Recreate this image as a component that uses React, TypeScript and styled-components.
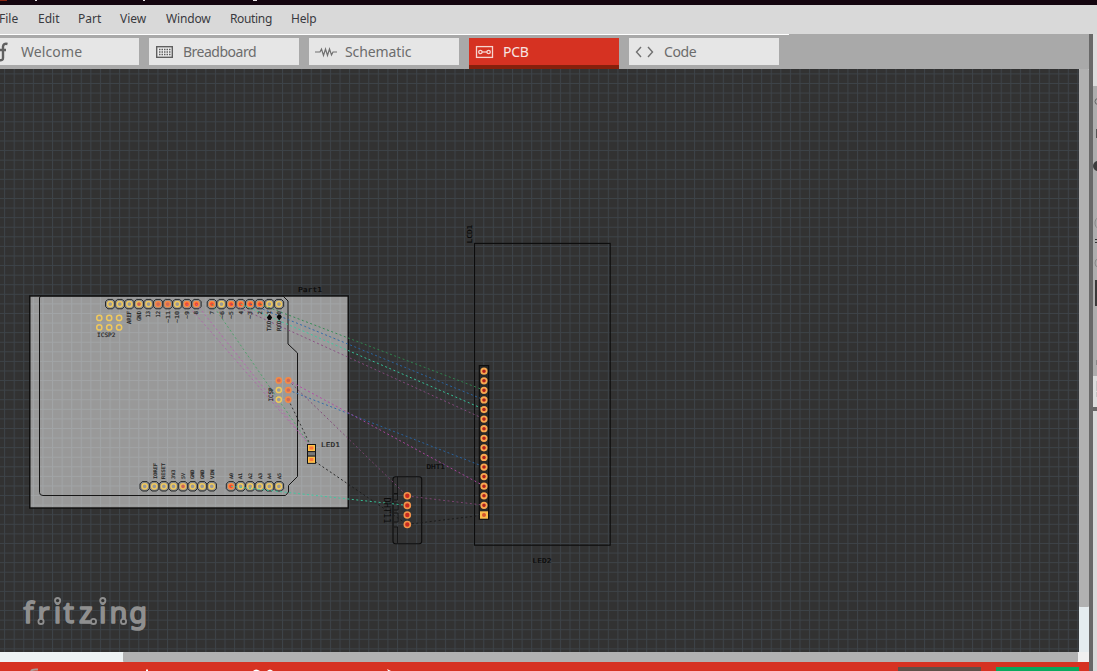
import React from "react";
import styled, { createGlobalStyle } from "styled-components";

const GlobalStyle = createGlobalStyle`
  html, body { margin: 0; padding: 0; overflow: hidden; }
  body { font-family: "Noto Sans", sans-serif; background: #a9a9a9; }
  * { box-sizing: border-box; }
`;

const Window = styled.div`
  width: 1097px;
  height: 671px;
  display: flex;
  flex-direction: column;
  overflow: hidden;
`;

const TitleBar = styled.div`
  height: 5px;
  background: #14050f;
  svg { display: block; }
`;

const MenuBar = styled.nav`
  height: 29px;
  display: flex;
  align-items: center;
  padding-bottom: 2px;
  margin-left: -1px;
  background: #d9d9d9;
  color: #3a3a40;
  font-size: 12px;
  line-height: 16px;
`;

const MenuItem = styled.span<{ $w: number; $ls: number }>`
  flex: 0 0 ${(p) => p.$w}px;
  letter-spacing: ${(p) => p.$ls}px;
  white-space: nowrap;
`;

const Workspace = styled.div`
  display: flex;
  height: 637px;
`;

const Main = styled.main`
  width: 1089px;
  display: flex;
  flex-direction: column;
`;

const TabStrip = styled.div`
  height: 35px;
  background: #a9a9a9;
`;

const TabHighlight = styled.div`
  width: 789px;
  height: 1px;
  background: #fff;
`;

const Tabs = styled.div`
  display: flex;
  gap: 10px;
  padding-top: 3px;
  margin-left: -11px;
`;

const Tab = styled.div<{ $active?: boolean; $icon?: number; $ls?: number }>`
  width: 150px;
  height: ${(p) => (p.$active ? 31 : 27)}px;
  padding: 0 0 0 6px;
  display: flex;
  align-items: center;
  background: ${(p) => (p.$active ? "#d63222" : "#e6e6e6")};
  border-bottom: ${(p) => (p.$active ? "4px solid #86200c" : "none")};
  color: ${(p) => (p.$active ? "#f6e4e1" : "#6c6c6c")};
  font-size: 14px;
  line-height: 20px;
  letter-spacing: ${(p) => p.$ls ?? 0}px;
  svg { flex: 0 0 ${(p) => p.$icon ?? 28}px; }
`;

const CanvasRow = styled.div`
  display: flex;
  height: 583px;
`;

const Board = styled.svg`
  display: block;
  width: 1079px;
  height: 583px;
  background: #323232;
`;

const VScroll = styled.div`
  width: 10px;
  background: #e5ecef;
`;

const VThumb = styled.div`
  height: 538px;
  background: #b1b1b1;
  border-radius: 1px;
`;

const HScroll = styled.div`
  height: 10px;
  display: flex;
  background: #eef3f4;
`;

const HThumb = styled.div`
  margin-left: 123px;
  width: 955px;
  background: #b1b1b1;
  border-radius: 1px;
`;

const ScrollCorner = styled.div`
  flex: 1;
  background: #f0f0f0;
`;

const Footer = styled.footer`
  height: 9px;
  display: flex;
  background: #d63222;
`;

const FooterMarks = styled.svg`
  flex: 0 0 898px;
  height: 9px;
`;

const FooterButton = styled.div<{ $color: string }>`
  flex: 0 0 83px;
  height: 4px;
  margin: 5px 15px 0 0;
  background: ${(p) => p.$color};
`;

const Splitter = styled.div`
  width: 4px;
  background: #686868;
`;

const Side = styled.aside`
  width: 4px;
  display: flex;
  flex-direction: column;
`;

const SidePart = styled.div<{ $h: number; $c: string }>`
  height: ${(p) => p.$h}px;
  background: ${(p) => p.$c};
  svg { display: block; }
`;

const P = 9.583;
const run = (start: number, n: number) => Array.from({ length: n }, (_, i) => start + i * P);

type PinKind = "open" | "warm" | "muted" | "hot";
const ringColor: Record<PinKind, string> = { open: "#f0c95c", warm: "#efbc58", muted: "#f58a45", hot: "#fb8a42" };
const coreColor: Record<PinKind, string> = { open: "#999", warm: "#c9665a", muted: "#cf6a58", hot: "#ee4a34" };

const Pin = ({ x, y, kind, frame }: { x: number; y: number; kind: PinKind; frame?: boolean }) => (
  <g>
    {frame && (
      <path
        d={`M${x - 2.4} ${y - 4.7}h4.8l2.3 2.3v4.8l-2.3 2.3h-4.8l-2.3-2.3v-4.8z`}
        fill="#8d8d8d"
        stroke="#26292b"
        strokeWidth="1"
      />
    )}
    <circle cx={x} cy={y} r="2.6" fill={coreColor[kind]} stroke={ringColor[kind]} strokeWidth="1.5" />
  </g>
);

const Silk = ({ x, y, w, children, size = 6, rot = 0, end, color = "#1f1f1f" }: {
  x: number; y: number; w: number; children: string; size?: number; rot?: number; end?: boolean; color?: string;
}) => (
  <text
    transform={`translate(${x} ${y}) rotate(${rot})`}
    fontFamily='"DejaVu Sans Mono", monospace'
    fontSize={size}
    fill={color}
    stroke={color}
    strokeWidth=".15"
    textLength={w}
    lengthAdjust="spacingAndGlyphs"
    textAnchor={end ? "end" : "start"}
  >
    {children}
  </text>
);

const topKinds: PinKind[] = ["open", "open", "open", "warm", "open", "muted", "muted", "open", "hot", "hot"];
const topKinds2: PinKind[] = ["hot", "open", "hot", "hot", "hot", "hot", "open", "open"];
const lowKinds: PinKind[] = ["open", "open", "open", "open", "warm", "open", "open", "open"];
const lowKinds2: PinKind[] = ["hot", "open", "open", "open", "open", "open"];

const topLabels: [string, number, number][] = [
  ["AREF", 129.2, 13], ["GND", 138.8, 10], ["13", 148.3, 6.5], ["12", 157.9, 6.5],
  ["~11", 167.5, 12], ["~10", 177.1, 12], ["~9", 186.7, 8], ["8", 196.3, 3.5],
  ["7", 212, 3.5], ["~6", 221.5, 8], ["~5", 231, 8], ["4", 240.6, 3.5], ["~3", 250.2, 8], ["2", 259.8, 3.5],
];
const lowLabels: [string, number, number][] = [
  ["IOREF", 154.7, 16], ["RESET", 163.2, 16], ["3V3", 173.5, 9.5], ["5V", 183, 6], ["GND", 192.6, 9.5],
  ["GND", 202.2, 9.5], ["VIN", 211.8, 9.5], ["A0", 231, 6], ["A1", 240.6, 6], ["A2", 250.2, 6],
  ["A3", 259.8, 6], ["A4", 269.3, 6], ["A5", 278.9, 6],
];

const wires: [number, number, number, number, string][] = [
  [259.8, 304, 484, 390.2, "#2e8b50"],
  [250.2, 304, 484, 399.8, "#2869ad"],
  [240.6, 304, 484, 409.3, "#36cfa2"],
  [231, 304, 484, 418.9, "#8a4b83"],
  [288.3, 390, 484, 466.8, "#2869ad"],
  [288.3, 380.4, 484, 486, "#b546a8"],
  [288.3, 380.4, 407.3, 496, "#814577"],
  [196.3, 304, 311.3, 447, "#ba62b3"],
  [186.7, 304, 311.3, 447, "#b066ac"],
  [212, 304, 311.3, 447, "#4ba46a"],
  [288.3, 399.5, 311.3, 447, "#292929"],
  [311.3, 459, 407.3, 524.4, "#1b1b1b"],
  [407.3, 524.4, 484, 515, "#181818"],
  [407.3, 496, 484, 505.2, "#814577"],
  [231, 486.3, 407.3, 505.4, "#36cfa2"],
];

const PcbBoard = () => (
  <Board viewBox="0 69 1079 583">
    <defs>
      <pattern id="grid" x="4.1" y="83" width={P} height={P} patternUnits="userSpaceOnUse">
        <path d={`M.5 0V${P}M0 .5H${P}`} stroke="#3d4348" strokeWidth="1" fill="none" />
      </pattern>
      <pattern id="gridLight" x="4.1" y="83" width={P} height={P} patternUnits="userSpaceOnUse">
        <path d={`M.5 0V${P}M0 .5H${P}`} stroke="#a1a4a6" strokeWidth="1" fill="none" />
      </pattern>
    </defs>
    <rect y="69" width="1079" height="583" fill="url(#grid)" />
    <rect x="29.8" y="296" width="318.4" height="212" fill="#999" />
    <rect x="29.8" y="296" width="318.4" height="212" fill="url(#gridLight)" stroke="#0c0c0c" strokeWidth="1.4" />
    <path
      d="M39.5 298q0-2 2-2H283l5 5V344l9.5 9V476.5l-9 9V492l-3 3.5H43q-3.5 0-3.5-3z"
      fill="none" stroke="#161616" strokeWidth="1"
    />
    <g fill="none" stroke="#0c0c0c" strokeWidth="1.1">
      <rect x="474.5" y="243.4" width="135.7" height="301.8" />
      <rect x="479.3" y="365.6" width="9.4" height="153.6" fill="#282828" />
      <rect x="393" y="476.7" width="28.7" height="67" rx="2.5" />
      <path d="M397.5 477v17h-3.5M397.5 543v-16M394 493.5h3.5M394 500h3.5v-6M394 503h4v7h-4M394 513h4v9h-4M394 527h4" strokeWidth=".8" />
    </g>

    {run(110.2, 10).map((x, i) => <Pin key={x} x={x} y={304.1} kind={topKinds[i]} frame />)}
    {run(211.9, 8).map((x, i) => <Pin key={x} x={x} y={304.1} kind={topKinds2[i]} frame />)}
    {run(144.7, 8).map((x, i) => <Pin key={x} x={x} y={486.3} kind={lowKinds[i]} frame />)}
    {run(231, 6).map((x, i) => <Pin key={x} x={x} y={486.3} kind={lowKinds2[i]} frame />)}
    {[99.3, 109.2, 119.1].map((x) => (
      <g key={x}><Pin x={x} y={317.9} kind="open" /><Pin x={x} y={327.4} kind="open" /></g>
    ))}

    <g fill="none" strokeWidth="1" strokeDasharray="2 2.5" opacity=".9">
      {wires.map(([a, b, c, d, s], i) => <path key={i} d={`M${a} ${b}L${c} ${d}`} stroke={s} />)}
    </g>

    <Pin x={278.8} y={380.4} kind="muted" />
    <Pin x={288.3} y={380.4} kind="muted" />
    <Pin x={278.8} y={390} kind="open" />
    <Pin x={288.3} y={390} kind="muted" />
    <Pin x={278.8} y={399.6} kind="open" />
    <Pin x={288.3} y={399.6} kind="muted" />

    {run(371.2, 15).map((y) => (
      <circle key={y} cx="484" cy={y} r="2.7" fill="#b01f1c" stroke="#f6a850" strokeWidth="1.8" />
    ))}
    <rect x="480" y="511.3" width="8" height="7.4" fill="#f8bd4c" />
    <circle cx="484" cy="515" r="2" fill="#d5552c" />
    {run(495.8, 4).map((y) => (
      <circle key={y} cx="407.3" cy={y} r="3" fill="#c8291f" stroke="#f2954a" strokeWidth="1.6" />
    ))}

    <rect x="307.5" y="444.5" width="8" height="18.8" fill="#777" stroke="#111" strokeWidth="1" />
    {[445, 456.6].map((y) => (
      <g key={y}>
        <rect x="308" y={y} width="7" height="6.2" fill="#ffc247" />
        <rect x="309.4" y={y + 1.4} width="4" height="3.2" fill="#fb773e" />
      </g>
    ))}
    <path d="M307.5 451.6h8M307.5 456h8" stroke="#1c1c1c" />

    {topLabels.map(([t, x, w]) => <Silk key={t} x={x + 2} y={311} w={w} rot={-90} end size={5.6}>{t}</Silk>)}
    {lowLabels.map(([t, x, w]) => <Silk key={x} x={x + 1.8} y={479} w={w} rot={-90} size={4.8}>{t}</Silk>)}
    <Silk x={271.3} y={331} w={10} rot={-90} size={5.6}>TXO</Silk>
    <Silk x={280.9} y={331} w={10} rot={-90} size={5.6}>RXO</Silk>
    <Silk x={271.3} y={314.6} w={3.5} rot={-90} size={5.6}>1</Silk>
    <Silk x={280.9} y={314.6} w={3.5} rot={-90} size={5.6}>0</Silk>
    <path d="M269.5 314l2.7 3.5-1.6 2.6h-2.2l-1.6-2.6zM279.2 320.4l-2.6-3.4 1.5-2.6h2.3l1.5 2.6z" fill="#080808" />

    <Silk x={97} y={336.8} w={18.5}>ICSP2</Silk>
    <Silk x={273.3} y={401.6} w={14} rot={-90}>ICSP</Silk>
    <Silk x={298} y={291.8} w={24} size={6.8} color="#080808">Part1</Silk>
    <Silk x={321} y={446.6} w={19} size={6.4}>LED1</Silk>
    <Silk x={426.5} y={469.2} w={18.5} size={6.6} color="#080808">DHT1</Silk>
    <Silk x={532.5} y={562.8} w={19} size={6.6} color="#080808">LED2</Silk>
    <Silk x={471.6} y={243.2} w={18.4} rot={-90} size={6.8} color="#080808">LCD1</Silk>
    <text transform="translate(384 497.5) rotate(90)" fontFamily='"DejaVu Sans Mono", monospace' fontSize="9.5" fill="#0a0a0a" textLength="26" lengthAdjust="spacingAndGlyphs">DHT11</text>

    <g fill="#8f8f8f" stroke="#8f8f8f" strokeWidth="1.6" strokeLinejoin="round">
      <text
        x="23.500 37.500 53.700 63.500 79 98.900 109.500 129.200" y="622.8"
        fontFamily='"Noto Sans", sans-serif' fontSize="29"
      >fritzing</text>
    </g>
    <g fill="#323232" stroke="#8f8f8f" strokeWidth="1.8">
      <circle cx="57.6" cy="600.6" r="2.6" />
      <circle cx="102.8" cy="600.6" r="2.6" />
      <circle cx="41" cy="621.4" r="2.6" />
      <circle cx="93.5" cy="621.4" r="2.6" />
      <circle cx="123.5" cy="621.4" r="2.6" />
    </g>
  </Board>
);

const menus: [string, number, number][] = [
  ["File", 39, 0], ["Edit", 40, 0], ["Part", 42, 0], ["View", 46, 0], ["Window", 64, -0.15], ["Routing", 61, -0.35], ["Help", 40, -0.2],
];

export default function App() {
  return (
    <Window>
      <GlobalStyle />
      <TitleBar>
        <svg width="800" height="5">
          <path d="M0 0h7v1H0z" fill="#8a2412" />
          <path d="M35 0h2v1h-2zM143 0h2v1h-2zM253 0h4v1h-4z" fill="#e8e3e6" />
        </svg>
      </TitleBar>
      <MenuBar>
        {menus.map(([t, w, ls]) => <MenuItem key={t} $w={w} $ls={ls}>{t}</MenuItem>)}
      </MenuBar>
      <Workspace>
        <Main>
          <TabStrip>
            <TabHighlight />
            <Tabs>
              <Tab $icon={26} $ls={0.1}>
                <svg width="26" height="20" fill="none" stroke="#606060" strokeWidth="2.4">
                  <path d="M12.500 2q-4-1-4.500 2.500V16q0 3-4 2M3 8h8" />
                </svg>
                Welcome
              </Tab>
              <Tab $ls={-0.5}>
                <svg width="28" height="20">
                  <rect x="1.700" y="4.700" width="15.600" height="10.600" fill="#ededed" stroke="#5f5f5f" strokeWidth="1.400" />
                  <path d="M4 7.500h12M4 10h12M4 12.500h12" stroke="#5f5f5f" strokeWidth="1.400" strokeDasharray="1.500 1" />
                </svg>
                Breadboard
              </Tab>
              <Tab $icon={30} $ls={-0.1}>
                <svg width="30" height="20" fill="none" stroke="#707070" strokeWidth="1.2">
                  <path d="M0 10h5l1.500-3 2 6.500L10.500 7l2 6.500L14.500 7l2 6 1.500-3h4" />
                </svg>
                Schematic
              </Tab>
              <Tab $active $ls={-0.3}>
                <svg width="28" height="20" fill="none" stroke="#f6d5cf" strokeWidth="1.3">
                  <rect x="1.500" y="4.600" width="16" height="10.800" />
                  <circle cx="5.400" cy="10" r="1.700" />
                  <circle cx="13.600" cy="10" r="1.700" />
                  <path d="M7 10h5" />
                </svg>
                PCB
              </Tab>
              <Tab $icon={29} $ls={-0.4}>
                <svg width="29" height="20" fill="none" stroke="#707070" strokeWidth="1.4">
                  <path d="M6 5L1.500 10 6 15M13 5l4.500 5-4.500 5" />
                </svg>
                Code
              </Tab>
            </Tabs>
          </TabStrip>
          <CanvasRow>
            <PcbBoard />
            <VScroll><VThumb /></VScroll>
          </CanvasRow>
          <HScroll><HThumb /><ScrollCorner /></HScroll>
          <Footer>
            <FooterMarks viewBox="0 0 898 9">
              <path d="M31 9q1-2 7-1.500" stroke="#a99a96" strokeWidth="2" fill="none" />
              <path d="M146 7.500h2V9h-2zM253 9q3-3 7 0zM267 9q3-3 6 0zM387 7l4 2h-3z" fill="#fff" />
            </FooterMarks>
            <FooterButton $color="#5f5048" />
            <FooterButton $color="#0aa85e" />
          </Footer>
        </Main>
        <Splitter />
        <Side>
          <SidePart $h={52} $c="#dcdcdc" />
          <SidePart $h={290} $c="#adadad">
            <svg width="4" height="290" fill="none">
              <circle cx="5" cy="15.500" r="3" stroke="#666" />
              <path d="M3 43h1v9H3z" fill="#555" />
              <circle cx="5" cy="80" r="5" fill="#3c3c3c" />
              <ellipse cx="5" cy="137" rx="3" ry="5" stroke="#888" />
              <path d="M2 153h2v1H2zM2 156h2v1H2z" fill="#333" />
              <ellipse cx="5" cy="177" rx="3" ry="4" stroke="#888" />
              <path d="M2 194h2v26H2z" fill="#3a3a3a" />
              <path d="M3 274h1v5H3z" fill="#888" />
            </svg>
          </SidePart>
          <SidePart $h={31} $c="#dcdcdc">
            <svg width="4" height="31"><path d="M3 5h1v10H3zM3 16h1v5H3z" fill="#c2c2c2" /></svg>
          </SidePart>
          <SidePart $h={4} $c="#686868" />
          <SidePart $h={260} $c="#dadada" />
        </Side>
      </Workspace>
    </Window>
  );
}
